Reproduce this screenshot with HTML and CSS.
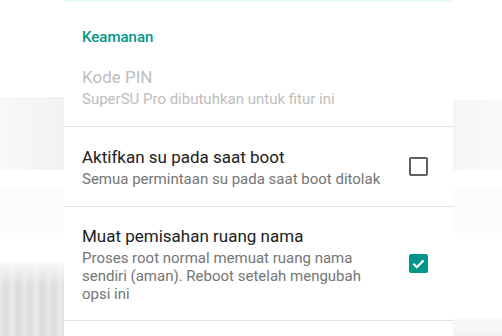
FILE: index.html
```html
<!DOCTYPE html>
<html lang="id">
<head>
<meta charset="utf-8">
<link rel="stylesheet" href="styles.css">
</head>
<body>
<div class="screen">
  <div class="side side-left">
    <div class="blk b1"></div>
    <div class="blk b2"></div>
    <div class="blk b3"></div>
  </div>
  <div class="panel">
    <div class="topstrip"></div>
    <div class="section-title">Keamanan</div>
    <div class="item disabled">
      <div class="texts">
        <div class="title">Kode PIN</div>
        <div class="summary">SuperSU Pro dibutuhkan untuk fitur ini</div>
      </div>
    </div>
    <div class="item">
      <div class="texts">
        <div class="title">Aktifkan su pada saat boot</div>
        <div class="summary">Semua permintaan su pada saat boot ditolak</div>
      </div>
      <div class="check"></div>
    </div>
    <div class="item tight">
      <div class="texts">
        <div class="title">Muat pemisahan ruang nama</div>
        <div class="summary">Proses root normal memuat ruang nama sendiri (aman). Reboot setelah mengubah opsi ini</div>
      </div>
      <div class="check checked">
        <svg viewBox="0 0 19 19" width="19" height="19"><path d="M4.4 9.8l3.4 3.4 6.8-6.8" fill="none" stroke="#fff" stroke-width="2.2"/></svg>
      </div>
    </div>
    <div class="item empty"></div>
  </div>
  <div class="side side-right">
    <div class="blk r1"></div>
    <div class="blk r2"></div>
    <div class="blk r3"></div>
  </div>
</div>
</body>
</html>
```
FILE: styles.css
```css
html, body {
  margin: 0;
  padding: 0;
  background: #fff;
}
body {
  font-family: Roboto, "Noto Sans", sans-serif;
}
.screen {
  display: grid;
  grid-template-columns: 64px 389px 49px;
  width: 502px;
  height: 336px;
  overflow: hidden;
}
.side {
  display: flex;
  flex-direction: column;
}
.blk { flex: none; }
.side-left .b1 {
  margin-top: 97px;
  height: 73px;
  background: linear-gradient(90deg, #f8f8f8, #f5f5f5 60%, #f2f2f2);
}
.side-left .b2 {
  margin-top: 18px;
  height: 45px;
  background: #fcfcfc;
}
.side-left .b3 {
  margin-top: 29px;
  height: 76px;
  background:
    linear-gradient(180deg, #f8f8f8 0, rgba(248,248,248,0) 30%),
    repeating-linear-gradient(90deg, #e8e8e8 0, #dcdcdc 6px, #eaeaea 12px, #dadada 18px, #e6e6e6 24px);
}
.side-right .r1 {
  margin-top: 100px;
  height: 70px;
  background: linear-gradient(90deg, #f5f5f5, #fafafa);
}
.side-right .r2 {
  margin-top: 18px;
  height: 45px;
  background: #fcfcfc;
}
.side-right .r3 {
  margin-top: 85px;
  height: 18px;
  background: linear-gradient(180deg, #fafafa, #f2f2f2);
}
.panel {
  background: #fff;
  display: flex;
  flex-direction: column;
}
.topstrip {
  height: 2px;
  background: #e6fbfb;
}
.section-title {
  padding: 25px 18px 0;
  height: 20px;
  line-height: 20px;
  font-size: 15px;
  font-weight: 500;
  color: #009688;
}
.item {
  display: flex;
  align-items: center;
  padding: 18px 25px 18px 18px;
  border-bottom: 1px solid #e0e0e0;
}
.item.tight {
  padding-top: 17px;
  padding-bottom: 17px;
}
.texts {
  flex: 1;
  padding-right: 20px;
}
.title {
  font-size: 17px;
  line-height: 25px;
  color: #212121;
}
.summary {
  font-size: 15px;
  line-height: 18px;
  color: #757575;
}
.disabled .title, .disabled .summary { color: #bdbdbd; }
.check {
  flex: none;
  width: 15px;
  height: 15px;
  border: 2px solid #5f5f5f;
  border-radius: 2px;
}
.check.checked {
  background: #009688;
  border-color: #009688;
  position: relative;
}
.check svg {
  position: absolute;
  left: -2px;
  top: -2px;
}
.item.empty { height: 40px; border-bottom: none; }
```
